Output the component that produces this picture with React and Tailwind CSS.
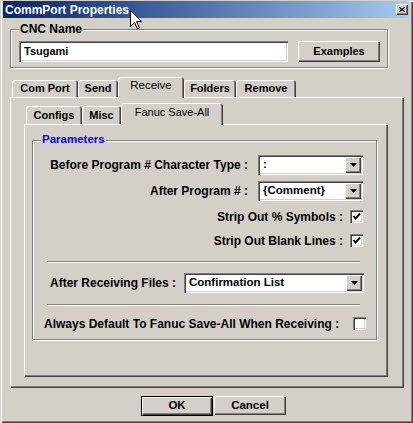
import React from 'react'

const raised = 'shadow-[inset_1px_1px_0_#fff,inset_-1px_-1px_0_#404040,inset_-2px_-2px_0_#808080]'
const sunken = 'shadow-[inset_1px_1px_0_#808080,inset_2px_2px_0_#404040,inset_-1px_-1px_0_#fff,inset_-2px_-2px_0_#d4d0c8]'
const tabEdge = 'shadow-[inset_1px_1px_0_#fff,inset_-1px_0_0_#404040,inset_-2px_0_0_#808080]'

const Tab = ({ label, w, selected }) => (
    <div
        className={`${tabEdge} ${w} rounded-t-[3px] bg-[#d4d0c8] flex justify-center pt-[3px] ${selected
            ? 'h-[21px] -mb-[1px] relative z-10 font-normal text-[11.5px]'
            : 'h-[17px] font-bold'}`}
    >
        {label}
    </div>
)

const InnerTab = ({ label, w, selected }) => (
    <div
        className={`${tabEdge} ${w} rounded-t-[3px] bg-[#d4d0c8] flex justify-center pt-[4px] ${selected
            ? 'h-[22px] -mb-[1px] relative z-10 font-normal text-[11px]'
            : 'h-[18px] font-bold'}`}
    >
        {label}
    </div>
)

const Arrow = () => (
    <div className={`${raised} w-[16px] h-[16px] ml-auto mr-[2px] flex items-center justify-center bg-[#d4d0c8]`}>
        <svg width="7" height="4" viewBox="0 0 7 4">
            <path d="M0 0h7L3.5 4z" fill="#000" />
        </svg>
    </div>
)

const Dropdown = ({ value, w }) => (
    <div className={`${sunken} ${w} h-[20px] bg-white flex items-center pl-[5px] font-bold text-[11.5px]`}>
        <span>{value}</span>
        <Arrow />
    </div>
)

const Check = ({ checked }) => (
    <div className={`${sunken} w-[13px] h-[13px] bg-white flex items-center justify-center shrink-0`}>
        {checked && (
            <svg width="9" height="9" viewBox="0 0 9 9">
                <path d="M1.5 4 L3.5 6.5 L8 1.5" stroke="#000" strokeWidth="1.9" fill="none" />
            </svg>
        )}
    </div>
)

const Separator = () => (
    <div className="ml-[14px] w-[313px] h-[2px] border-t border-[#808080] border-b border-b-white" />
)

export default function App() {
    return (
        <div className="relative w-[413px] h-[423px] bg-[#d4d0c8] pt-[1px] px-[3px] text-[11px] text-black leading-none font-['Liberation_Sans',Arial,sans-serif] shadow-[inset_1px_1px_0_#d4d0c8,inset_2px_2px_0_#fff,inset_-1px_-1px_0_#404040,inset_-2px_-2px_0_#808080] overflow-hidden">
            {/* title bar */}
            <div className="h-[17px] mr-[1px] flex items-center bg-gradient-to-r from-[#0a246a] to-[#a6caf0] pl-[2px]">
                <span className="text-white font-bold text-[12px]">CommPort Properties</span>
                <div className={`${raised} ml-auto mr-[1px] w-[12px] h-[11px] bg-[#d4d0c8] flex items-center justify-center`}>
                    <svg width="6" height="5" viewBox="0 0 6 5">
                        <path d="M0 0L6 5M6 0L0 5" stroke="#000" strokeWidth="1.2" />
                    </svg>
                </div>
            </div>

            {/* CNC Name */}
            <div className="relative mt-[11px] ml-[7px] w-[378px] h-[39px] border border-[#808080] shadow-[inset_1px_1px_0_#fff,1px_1px_0_#fff] flex pl-[8px] pt-[11px]">
                <span className="absolute -top-[7px] left-[8px] px-[1px] bg-[#d4d0c8] font-bold text-[12px]">CNC Name</span>
                <div className={`${sunken} w-[269px] h-[21px] bg-white flex items-center pl-[5px] font-bold`}>Tsugami</div>
                <div className={`${raised} ml-[10px] w-[82px] h-[21px] flex items-center justify-center font-bold`}>Examples</div>
            </div>

            {/* tabs */}
            <div className="mt-[9px] ml-[9px] h-[20px] flex items-end">
                <Tab label="Com Port" w="w-[66px]" />
                <Tab label="Send" w="w-[40px]" />
                <Tab label="Receive" w="w-[66px]" selected />
                <Tab label="Folders" w="w-[52px]" />
                <Tab label="Remove" w="w-[60px]" />
            </div>
            <div className={`${raised} ml-[7px] w-[394px] h-[291px] pt-[6px]`}>
                <div className="ml-[16px] h-[21px] flex items-end">
                    <InnerTab label="Configs" w="w-[56px]" />
                    <InnerTab label="Misc" w="w-[39px]" />
                    <InnerTab label="Fanuc Save-All" w="w-[102px]" selected />
                </div>
                <div className={`${raised} ml-[14px] w-[364px] h-[253px] pt-[16px] pl-[8px]`}>
                    <div className="relative w-[345px] h-[200px] border border-[#808080] shadow-[inset_1px_1px_0_#fff,1px_1px_0_#fff] font-bold text-[12px]">
                        <span className="absolute -top-[7px] left-[8px] px-[1px] bg-[#d4d0c8] text-[#0000ff] text-[11.5px]">Parameters</span>

                        <div className="mt-[14px] h-[20px] flex items-center justify-end pr-[13px]">
                            <span className="mr-[10px]">Before Program # Character Type :</span>
                            <Dropdown value=":" w="w-[105px]" />
                        </div>
                        <div className="mt-[6px] h-[20px] flex items-center justify-end pr-[13px]">
                            <span className="mr-[10px]">After Program # :</span>
                            <Dropdown value="{Comment}" w="w-[105px]" />
                        </div>
                        <div className="mt-[9px] h-[13px] flex items-center justify-end pr-[13px]">
                            <span className="mr-[7px]">Strip Out % Symbols :</span>
                            <Check checked />
                        </div>
                        <div className="mt-[11px] h-[13px] flex items-center justify-end pr-[13px]">
                            <span className="mr-[7px]">Strip Out Blank Lines :</span>
                            <Check checked />
                        </div>

                        <div className="mt-[14px]"><Separator /></div>

                        <div className="mt-[10px] h-[20px] flex items-center pl-[17px] pr-[12px]">
                            <span>After Receiving Files :</span>
                            <div className="ml-auto"><Dropdown value="Confirmation List" w="w-[180px]" /></div>
                        </div>

                        <div className="mt-[11px]"><Separator /></div>

                        <div className="mt-[11px] h-[13px] flex items-center pl-[11px] pr-[10px]">
                            <span>Always Default To Fanuc Save-All When Receiving :</span>
                            <div className="ml-auto"><Check /></div>
                        </div>
                    </div>
                </div>
            </div>

            {/* buttons */}
            <div className="mt-[8px] ml-[138px] flex font-bold text-[11.5px]">
                <div className="w-[72px] h-[20px] border border-black">
                    <div className={`${raised} w-full h-full flex items-center justify-center`}>OK</div>
                </div>
                <div className={`${raised} ml-[1px] w-[72px] h-[19px] flex items-center justify-center`}>Cancel</div>
            </div>

            {/* mouse pointer */}
            <svg className="absolute left-[129px] top-[9px]" width="14" height="22" viewBox="0 0 14 22">
                <path d="M1.5 1.5 L1.5 17.5 L5.5 13.5 L8.5 20 L10.5 19 L7.5 12.5 L12.5 12.5 Z" fill="#fff" stroke="#000" strokeWidth="1" />
            </svg>
        </div>
    )
}
